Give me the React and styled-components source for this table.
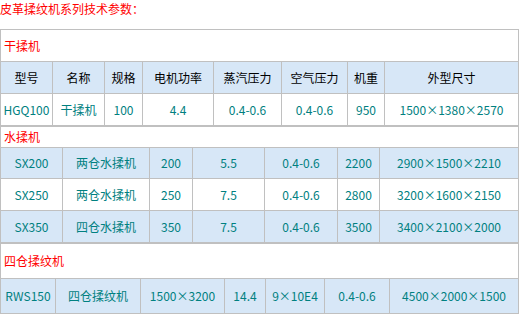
import { styled, createGlobalStyle } from 'styled-components';

const GlobalStyle = createGlobalStyle`
  body {
    margin: 0;
    background: #ffffff;
    font-family: "Noto Sans CJK SC", "Liberation Sans", sans-serif;
    font-size: 12px;
  }
`;

const groups = [
  {
    title: '干揉机',
    titleHeight: 31,
    cols: [52, 52, 38, 71, 68, 66, 37, 134],
    header: ['型号', '名称', '规格', '电机功率', '蒸汽压力', '空气压力', '机重', '外型尺寸'],
    rows: [
      { cells: ['HGQ100', '干揉机', '100', '4.4', '0.4-0.6', '0.4-0.6', '950', '1500×1380×2570'], blue: false, height: 31 },
    ],
  },
  {
    title: '水揉机',
    titleHeight: 20,
    cols: [62, 87, 43, 72, 73, 42, 139],
    rows: [
      { cells: ['SX200', '两仓水揉机', '200', '5.5', '0.4-0.6', '2200', '2900×1500×2210'], blue: true, height: 30 },
      { cells: ['SX250', '两仓水揉机', '250', '7.5', '0.4-0.6', '2800', '3200×1600×2150'], blue: false, height: 31 },
      { cells: ['SX350', '四仓水揉机', '350', '7.5', '0.4-0.6', '3500', '3400×2100×2000'], blue: true, height: 31 },
    ],
  },
  {
    title: '四仓揉纹机',
    titleHeight: 34,
    cols: [55, 85, 84, 41, 59, 65, 129],
    rows: [
      { cells: ['RWS150', '四仓揉纹机', '1500×3200', '14.4', '9×10E4', '0.4-0.6', '4500×2000×1500'], blue: true, height: 34 },
    ],
  },
];

export default function App() {
  return (
    <Page>
      <GlobalStyle />
      <PageTitle>皮革揉纹机系列技术参数：</PageTitle>

      {groups.map((group) => (
        <SpecTable key={group.title}>
          <colgroup>
            {group.cols.map((w, i) => (
              <Col key={i} $w={w} />
            ))}
          </colgroup>
          <tbody>
            {/* Section heading */}
            <tr>
              <GroupCell colSpan={group.cols.length} $h={group.titleHeight}>
                {group.title}
              </GroupCell>
            </tr>

            {/* Column names, first table only */}
            {group.header && (
              <tr>
                {group.header.map((h) => (
                  <HeadCell key={h}>{h}</HeadCell>
                ))}
              </tr>
            )}

            {group.rows.map((row) => (
              <tr key={row.cells[0]}>
                {row.cells.map((c, i) => (
                  <DataCell key={i} $blue={row.blue} $h={row.height}>
                    {c}
                  </DataCell>
                ))}
              </tr>
            ))}
          </tbody>
        </SpecTable>
      ))}
    </Page>
  );
}

const Page = styled.div`
  width: 521px;
`;

const PageTitle = styled.div`
  color: #ff0000;
  font-size: 12px;
  line-height: 18px;
  margin: 0 0 11px;
  white-space: nowrap;
`;

const SpecTable = styled.table`
  width: 519px;
  table-layout: fixed;
  border-collapse: collapse;
  border: 1px solid #c0c0c0;
`;

const Col = styled.col`
  width: ${({ $w }) => $w}px;
`;

const GroupCell = styled.td`
  height: ${({ $h }) => $h}px;
  padding: 0 3px;
  border: 1px solid #c0c0c0;
  background: #ffffff;
  color: #ff0000;
  font-size: 12px;
  line-height: 14px;
  text-align: left;
  vertical-align: middle;
`;

const HeadCell = styled.td`
  height: 31px;
  padding: 0;
  border: 1px solid #c0c0c0;
  background: #d7e7f7;
  color: #000000;
  font-size: 12px;
  line-height: 14px;
  text-align: center;
  vertical-align: middle;
  white-space: nowrap;
`;

const DataCell = styled.td`
  height: ${({ $h }) => $h}px;
  padding: 0;
  border: 1px solid #c0c0c0;
  background: ${({ $blue }) => ($blue ? '#d7e7f7' : '#ffffff')};
  color: #008080;
  font-size: 12px;
  line-height: 14px;
  text-align: center;
  vertical-align: middle;
  white-space: nowrap;
`;
